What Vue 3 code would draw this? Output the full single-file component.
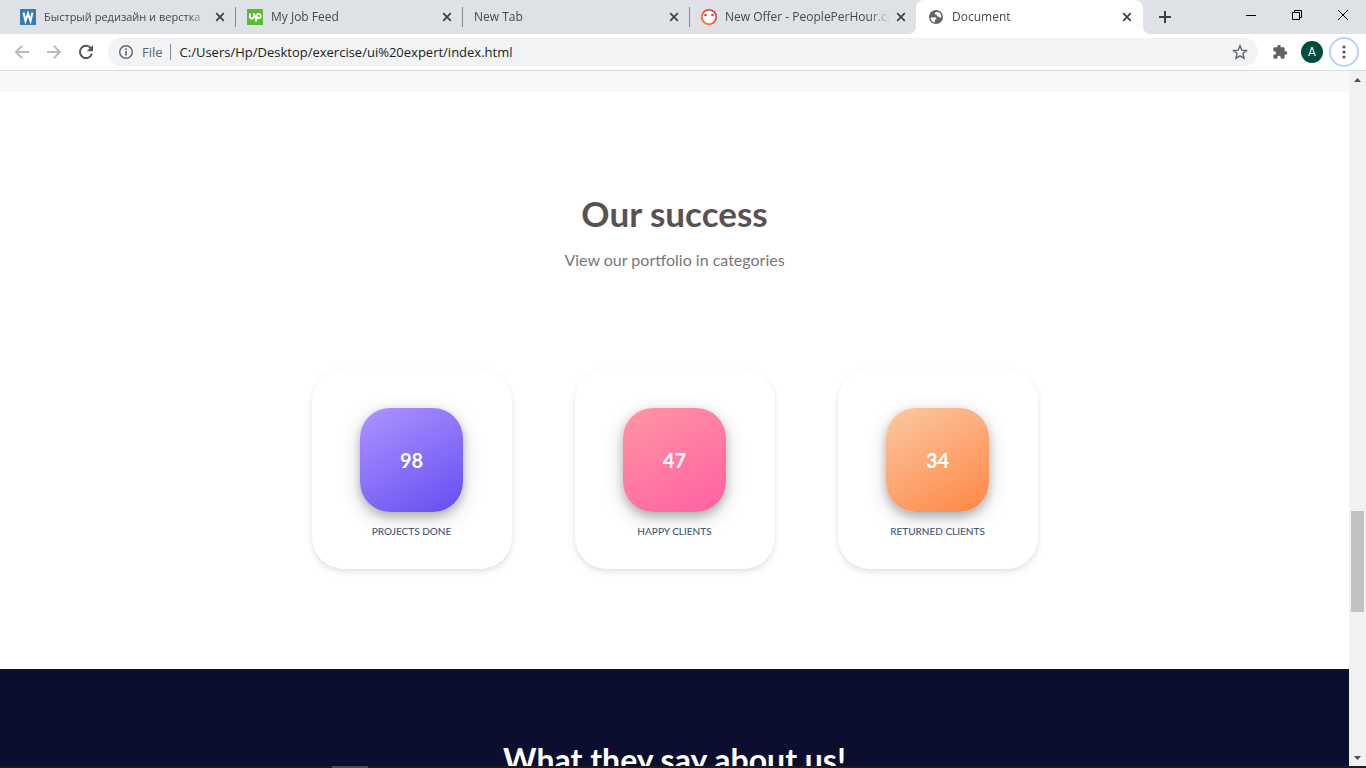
<script setup>
import { ref } from 'vue'

const address = ref('C:/Users/Hp/Desktop/exercise/ui%20expert/index.html')
const tabs = [
  { title: 'Быстрый редизайн и верстка', icon: 'w', lang: 'ru' },
  { title: 'My Job Feed', icon: 'up' },
  { title: 'New Tab', icon: null },
  { title: 'New Offer - PeoplePerHour.com', icon: 'pph' },
  { title: 'Document', icon: 'globe', active: true }
]
const stats = [
  { value: 98, label: 'PROJECTS DONE', tone: 'violet' },
  { value: 47, label: 'HAPPY CLIENTS', tone: 'pink' },
  { value: 34, label: 'RETURNED CLIENTS', tone: 'orange' }
]
</script>

<template>
  <div class="browser">
    <header class="tabstrip">
      <div v-for="tab in tabs" :key="tab.title" class="tab" :class="{ active: tab.active }">
        <svg v-if="tab.icon === 'w'" class="favicon" viewBox="0 0 16 16" aria-hidden="true">
          <rect width="16" height="16" fill="#377bb5" />
          <path d="M3.500 3.500 5.500 12 8 4.500 10.500 12 12.500 3.500" fill="none" stroke="#fff" stroke-width="2" />
        </svg>
        <svg v-else-if="tab.icon === 'up'" class="favicon" viewBox="0 0 16 16" aria-hidden="true">
          <rect width="16" height="16" fill="#5bbc2f" />
          <path d="M2.900 4.500v3a2 2 0 0 0 4 0V4.500L8.600 8.500M8.800 12.500 9.700 7" fill="none" stroke="#fff" stroke-width="1.800" />
          <circle cx="11.600" cy="7" r="2.100" fill="none" stroke="#fff" stroke-width="1.700" />
        </svg>
        <svg v-else-if="tab.icon === 'pph'" class="favicon" viewBox="0 0 16 16" aria-hidden="true">
          <defs>
            <linearGradient id="ring" x1="0" y1="1" x2="1" y2="0">
              <stop offset="0" stop-color="#ff7a1a" />
              <stop offset="1" stop-color="#ea1f35" />
            </linearGradient>
          </defs>
          <circle cx="8" cy="8" r="7.200" fill="#fff" stroke="url(#ring)" stroke-width="1.600" />
          <circle cx="4.500" cy="6" r="1.300" fill="#f0322f" />
          <circle cx="11.500" cy="6" r="1.300" fill="#f0322f" />
        </svg>
        <svg v-else-if="tab.icon === 'globe'" class="favicon" viewBox="0 0 16 16" aria-hidden="true">
          <circle cx="8" cy="8" r="7" fill="#5f6368" />
          <path d="M2.500 8.500 7 8.300Q8.800 8.600 8.500 10.300L6.800 10.800 6.900 13.500Q3 12.700 2.500 8.500Z" fill="#fff" />
          <path d="M8.600 2.700Q6.300 3.300 6.600 5.200L8.500 5.600Q8.500 7.700 10.500 7.700L12 8.800 13.400 8.500Q13.600 4 9.600 2.700L10.400 4Z" fill="#fff" />
        </svg>
        <button type="button" class="tab-title" :lang="tab.lang">{{ tab.title }}</button>
        <button type="button" class="tab-close" :aria-label="'Close ' + tab.title">
          <svg width="10" height="10" viewBox="0 0 10 10"><path d="m1.200 1.200 7.600 7.600M8.800 1.200 1.200 8.800" fill="none" stroke="#3c4043" stroke-width="1.700" /></svg>
        </button>
      </div>
      <button type="button" class="new-tab" aria-label="New tab">
        <svg width="14" height="14" viewBox="0 0 14 14"><path d="M7 1v12M1 7h12" fill="none" stroke="#3c4043" stroke-width="2" /></svg>
      </button>
      <div class="window-controls">
        <button type="button" aria-label="Minimize">
          <svg width="12" height="12" viewBox="0 0 12 12"><path d="M1 6.500h10" stroke="#000" /></svg>
        </button>
        <button type="button" aria-label="Restore">
          <svg width="12" height="12" viewBox="0 0 12 12"><path d="M1.500 3.500h7v7h-7zM3.500 3.500v-2h7v7h-2" fill="none" stroke="#000" /></svg>
        </button>
        <button type="button" aria-label="Close window">
          <svg width="12" height="12" viewBox="0 0 12 12"><path d="m1 1 10 10M11 1 1 11" stroke="#000" /></svg>
        </button>
      </div>
    </header>

    <nav class="toolbar" aria-label="Browser toolbar">
      <button type="button" class="nav-button" aria-label="Back">
        <svg width="16" height="16" viewBox="0 0 16 16"><path d="M15 8H2.500M8.200 1.800 2 8l6.200 6.200" fill="none" stroke="#babcbe" stroke-width="2" /></svg>
      </button>
      <button type="button" class="nav-button" aria-label="Forward">
        <svg width="16" height="16" viewBox="0 0 16 16"><path d="M1 8h12.500M7.800 1.800 14 8l-6.200 6.200" fill="none" stroke="#babcbe" stroke-width="2" /></svg>
      </button>
      <button type="button" class="nav-button" aria-label="Reload">
        <svg width="16" height="16" viewBox="0 0 16 16"><path d="M12.900 4.200A6.100 6.100 0 1 0 13.900 9.700" fill="none" stroke="#54585d" stroke-width="2" /><path d="M15 1v6.200H8.800z" fill="#54585d" /></svg>
      </button>
      <div class="omnibox">
        <button type="button" class="site-info">
          <svg width="16" height="16" viewBox="0 0 16 16" aria-hidden="true"><circle cx="8" cy="8" r="6.300" fill="none" stroke="#5f6368" stroke-width="1.400" /><path d="M8 7v4.500M8 4.300v1.600" stroke="#5f6368" stroke-width="1.600" /></svg>
          <span>File</span>
        </button>
        <input v-model="address" type="text" class="address" aria-label="Address" spellcheck="false" />
        <button type="button" class="star" aria-label="Bookmark this page">
          <svg width="16" height="16" viewBox="0 0 16 16"><path d="m8 1.800 1.800 4.300 4.700.4-3.500 3.100 1 4.600L8 11.800l-4 2.400 1-4.600L1.500 6.500l4.700-.4z" fill="none" stroke="#5f6368" stroke-width="1.400" /></svg>
        </button>
      </div>
      <button type="button" class="extension" aria-label="Extensions">
        <svg width="16" height="16" viewBox="0 0 24 24"><path d="M20.500 11H19V7c0-1.100-.9-2-2-2h-4V3.500a2.500 2.500 0 0 0-5 0V5H4c-1.100 0-2 .9-2 2v3.800h1.500a2.700 2.700 0 0 1 0 5.400H2V20c0 1.100.9 2 2 2h3.800v-1.500a2.700 2.700 0 0 1 5.400 0V22H17c1.100 0 2-.9 2-2v-4h1.500a2.500 2.500 0 0 0 0-5z" fill="#5f6368" /></svg>
      </button>
      <button type="button" class="avatar" aria-label="Profile A">A</button>
      <button type="button" class="menu" aria-label="Menu">
        <svg width="4" height="14" viewBox="0 0 4 14"><g fill="#54585d"><circle cx="2" cy="2" r="1.600" /><circle cx="2" cy="7" r="1.600" /><circle cx="2" cy="12" r="1.600" /></g></svg>
      </button>
    </nav>

    <div class="viewport">
      <main class="page">
        <div class="previous"></div>
        <section class="success">
          <h2>Our success</h2>
          <p class="lead">View our portfolio in categories</p>
          <div class="cards">
            <article v-for="stat in stats" :key="stat.label" class="card">
              <div class="badge" :class="stat.tone">{{ stat.value }}</div>
              <p class="label">{{ stat.label }}</p>
            </article>
          </div>
        </section>
        <section class="testimonials">
          <h2>What they say about us!</h2>
        </section>
      </main>
      <aside class="scrollbar" aria-label="Page scroll">
        <button type="button" aria-label="Scroll up">
          <svg width="7" height="4" viewBox="0 0 7 4"><path d="M0 4h7L3.500 0z" fill="#505050" /></svg>
        </button>
        <div class="track"><div class="thumb"></div></div>
        <button type="button" aria-label="Scroll down">
          <svg width="7" height="4" viewBox="0 0 7 4"><path d="M0 0h7L3.500 4z" fill="#505050" /></svg>
        </button>
      </aside>
    </div>
    <footer class="taskbar"><span></span></footer>
  </div>
</template>

<style>
body {
  margin: 0;
  overflow: hidden;
}
</style>

<style scoped>
.browser {
  display: flex;
  flex-direction: column;
  height: 100vh;
  overflow: hidden;
  background: #fff;
  font-family: "Open Sans", "Noto Sans", sans-serif;
}
button,
input {
  margin: 0;
  padding: 0;
  border: 0;
  background: none;
  font: inherit;
  color: inherit;
}
button {
  display: flex;
  align-items: center;
  justify-content: center;
}
svg {
  display: block;
  flex: none;
}
.tabstrip {
  display: flex;
  flex: none;
  height: 34px;
  padding-left: 8px;
  background: #dee1e6;
}
.tab {
  box-sizing: border-box;
  position: relative;
  display: flex;
  flex: 0 1 227px;
  align-items: center;
  min-width: 0;
  padding: 0 8px 0 12px;
  color: #45494d;
  font-size: 12px;
}
.tab:not(.active)::after {
  content: "";
  position: absolute;
  right: -1px;
  top: 7px;
  width: 1px;
  height: 20px;
  background: #85888d;
}
.tab:nth-child(4)::after {
  display: none;
}
.tab.active {
  padding-right: 9px;
  background: #fff;
  border-radius: 8px 8px 0 0;
}
.tab.active::before,
.tab.active::after {
  content: "";
  position: absolute;
  bottom: 0;
  width: 8px;
  height: 8px;
}
.tab.active::before {
  left: -8px;
  background: radial-gradient(circle at 0 0, transparent 8px, #fff 8px);
}
.tab.active::after {
  right: -8px;
  background: radial-gradient(circle at 100% 0, transparent 8px, #fff 8px);
}
.favicon {
  width: 16px;
  height: 16px;
  margin-right: 8px;
}
.tab-title {
  flex: 1;
  justify-content: flex-start;
  min-width: 0;
  overflow: hidden;
  white-space: nowrap;
  text-align: left;
  line-height: 20px;
  mask-image: linear-gradient(to right, #000 calc(100% - 20px), transparent);
}
.tab-title:lang(ru) {
  font-size: 11px;
}
.tab-close {
  width: 14px;
  height: 16px;
  margin-left: 4px;
}
.new-tab {
  width: 28px;
  margin-left: 8px;
}
.window-controls {
  display: flex;
  margin-left: auto;
}
.window-controls button {
  width: 46px;
  height: 29px;
}
.toolbar {
  display: flex;
  flex: none;
  align-items: center;
  height: 36px;
  padding: 0 7px 0 6px;
  border-bottom: 1px solid #dadce0;
}
.nav-button {
  width: 32px;
  height: 32px;
}
.omnibox {
  display: flex;
  flex: 1;
  align-items: center;
  height: 28px;
  margin-left: 6px;
  padding: 0 10px;
  border-radius: 14px;
  background: #f1f3f4;
  color: #202124;
}
.site-info {
  gap: 8px;
  height: 16px;
  padding-right: 7px;
  border-right: 1px solid #85888d;
  color: #5f6368;
  font-size: 13px;
}
.address {
  flex: 1;
  min-width: 0;
  height: 24px;
  margin-left: 9px;
  outline: 0;
  font-size: 13px;
}
.extension {
  width: 16px;
  margin-left: 14px;
}
.avatar {
  width: 22px;
  height: 22px;
  margin-left: 13px;
  border-radius: 50%;
  background: #004d40;
  color: #fff;
  font: 12px Roboto, sans-serif;
}
.menu {
  box-sizing: border-box;
  width: 30px;
  height: 30px;
  margin-left: 6px;
  border: 2px solid #b5d2fb;
  border-radius: 50%;
}
.viewport {
  display: flex;
  flex: 1;
  min-height: 0;
}
.page {
  flex: 1;
  min-width: 0;
  overflow: hidden;
  font-family: Lato, sans-serif;
  text-align: center;
}
.previous {
  height: 21px;
  background: #f8f8f8;
}
.success {
  padding: 98px 0 100px;
  color: #5a5252;
}
h2 {
  margin: 0;
  font-size: 35px;
  font-weight: 700;
  line-height: 46px;
}
.lead {
  margin: 12px 0 97px;
  color: #777;
  font-size: 16px;
  line-height: 24px;
}
.cards {
  display: flex;
  justify-content: center;
  gap: 63px;
}
.card {
  box-sizing: border-box;
  display: flex;
  flex-direction: column;
  align-items: center;
  width: 200px;
  height: 200px;
  padding-top: 39px;
  border-radius: 32px;
  background: #fff;
  box-shadow: 0 3px 6px rgba(0, 0, 0, 0.12);
}
.badge {
  display: flex;
  align-items: center;
  justify-content: center;
  width: 103px;
  height: 104px;
  border-radius: 30px;
  box-shadow: 0 4px 8px rgba(0, 0, 0, 0.2), 0 6px 20px rgba(0, 0, 0, 0.19);
  color: #fff;
  font-size: 20px;
  font-weight: 700;
}
.violet {
  background: linear-gradient(150deg, #ae94ff, #654df2);
}
.pink {
  background: linear-gradient(150deg, #ff96a4, #ff5fa2);
}
.orange {
  background: linear-gradient(150deg, #fbc8a2, #ff8644);
}
.label {
  margin: 11px 0 0;
  color: #43597a;
  font-size: 10px;
  font-weight: 500;
  line-height: 16px;
}
.testimonials {
  padding: 68px 0;
  background: #0b0e2f;
  color: #fff;
}
.testimonials h2 {
  font-size: 32px;
}
.scrollbar {
  display: flex;
  flex: none;
  flex-direction: column;
  width: 17px;
  background: #f1f1f1;
}
.scrollbar button {
  height: 17px;
}
.track {
  display: grid;
  flex: 1;
  grid-template-rows: 423fr 101fr 137fr;
  padding: 0 2px;
}
.thumb {
  grid-row: 2;
  background: #c1c1c1;
}
.taskbar {
  flex: none;
  height: 2px;
  background: #1c1c1c;
}
.taskbar span {
  display: block;
  width: 36px;
  height: 2px;
  margin-left: 332px;
  background: #4b4b4b;
}
</style>
